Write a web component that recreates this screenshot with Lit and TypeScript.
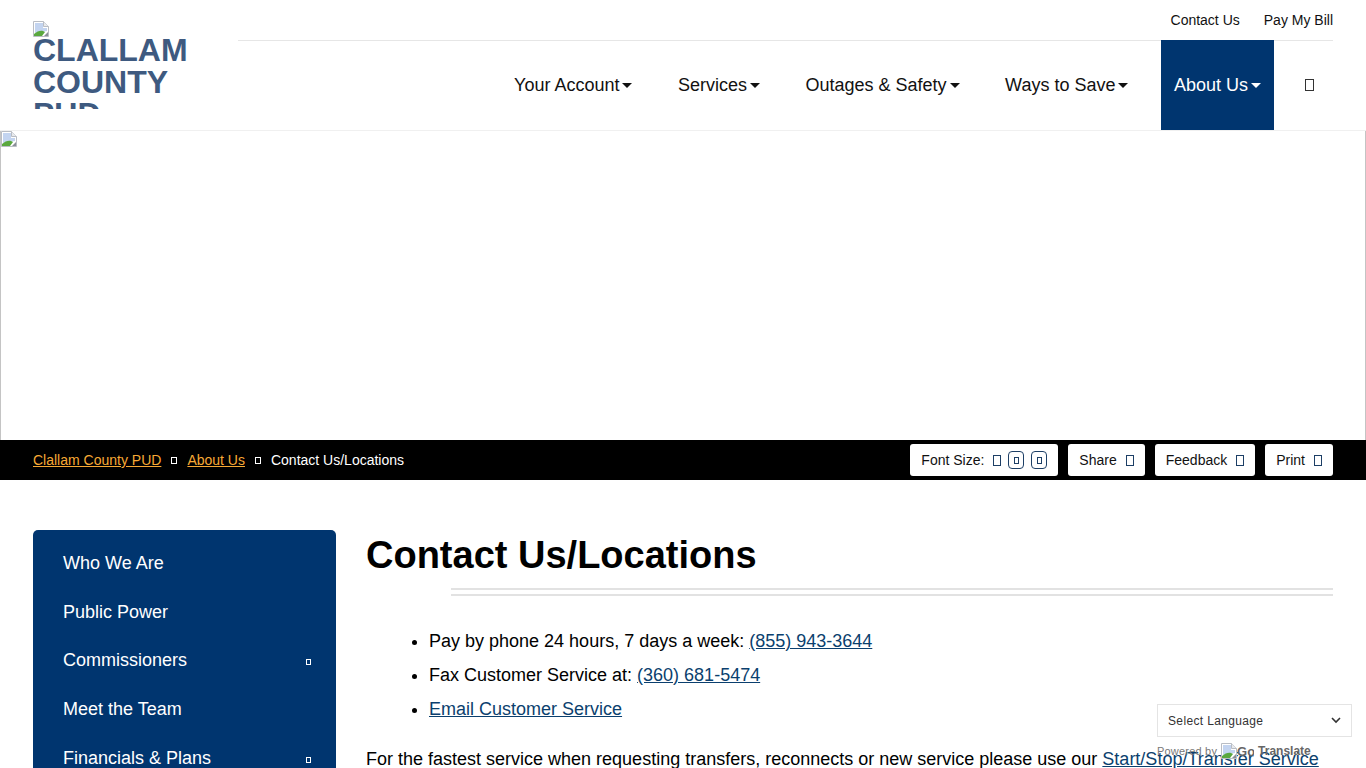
import { LitElement, html, css, svg } from "lit";
import { customElement } from "lit/decorators.js";

const broken = svg`<svg class="bi" width="16" height="16" viewBox="0 0 16 16"><path d="M.5.5h10l5 5v10H.5z" fill="#fff" stroke="#b9bdc4"/><path d="M10.5.5v5h5" fill="#e8eaed" stroke="#b9bdc4"/><path d="M2 2h8v5h4v3L2 12z" fill="#c3d4f0"/><path d="M1 15v-2c3-3 7-4 9-3l2 1-3 4z" fill="#5aa83e"/><path d="M11 15l4-4v4z" fill="#8a8f96"/></svg>`;

@customElement("app-root")
export class AppRoot extends LitElement {
  static styles = css`
    :host { display: block; height: 768px; overflow: hidden; position: relative; background: #fff; color: #000; font-family: "Liberation Sans", Arial, sans-serif; }
    a { color: inherit; text-decoration: none; }
    .tofu { display: inline-block; box-sizing: border-box; border: 1px solid currentColor; flex: none; }
    .bi { display: block; flex: none; }

    header { display: flex; height: 131px; box-sizing: border-box; border-bottom: 1px solid #f0f0f0; padding: 0 33px; }
    .logo { width: 205px; flex: none; padding-top: 21px; box-sizing: border-box; }
    .logo-img { width: 160px; height: 88px; overflow: hidden; color: #3e5a80; font-weight: 700; font-size: 32px; line-height: 32px; }
    .logo-img .bi { margin-bottom: -3px; }
    .hright { flex: 1; display: flex; flex-direction: column; }
    .util { height: 40px; box-sizing: border-box; border-bottom: 1px solid #e6e6e6; display: flex; justify-content: flex-end; align-items: center; gap: 24px; font-size: 14px; height: 41px; color: #111; }
    .nav { display: flex; justify-content: flex-end; height: 90px; margin-top: -1px; padding-right: 18px; font-size: 18px; color: #111; }
    .nav a { display: flex; align-items: center; padding: 0 13px; margin-left: 19.5px; }
    .nav a.active { background: #00356f; color: #fff; }
    .caret { width: 0; height: 0; border-left: 5px solid transparent; border-right: 5px solid transparent; border-top: 5px solid currentColor; margin-left: 3px; margin-top: 1px; }
    .nav .search { padding: 0; margin-left: 31px; width: 10px; }
    .nav .search .tofu { width: 9px; height: 12px; border-color: #333; }

    .hero { height: 309px; box-sizing: border-box; border: 1px solid #c4c4c4; border-top: none; border-bottom: none; }

    .crumbs { background: #000; height: 40px; display: flex; align-items: center; justify-content: space-between; padding: 0 33px; font-size: 14px; color: #fff; }
    .path { display: flex; align-items: center; }
    .path a { color: #f7a935; text-decoration: underline; }
    .path .tofu { width: 6px; height: 7px; margin: 1px 10px 0; }
    .tools { display: flex; gap: 10px; }
    .tool { background: #fff; color: #111; height: 32px; border-radius: 3px; display: flex; align-items: center; padding: 0 11px; gap: 9px; }
    .tool .tofu { width: 8px; height: 11px; border-color: #1d3f66; }
    .boxed { width: 16px; height: 18px; border: 1px solid #1d3f66; border-radius: 4px; display: flex; align-items: center; justify-content: center; box-sizing: border-box; }
    .boxed .tofu { width: 5px; height: 7px; }
    .sizes { display: flex; align-items: center; gap: 7px; }

    main { display: flex; padding: 50px 33px 0; gap: 30px; }
    .side { width: 303px; flex: none; background: #00356f; color: #fff; border-radius: 5px; padding: 9px 0 0 30px; box-sizing: border-box; height: 400px; font-size: 18px; }
    .side div { height: 48.8px; display: flex; align-items: center; justify-content: space-between; padding-right: 25px; }
    .side .tofu { width: 5px; height: 6px; margin-top: 3px; }
    .body { flex: 1; min-width: 0; }
    h1 { margin: 0; font-size: 38px; line-height: 50px; font-weight: 700; }
    .rule { margin: 8px 0 0 85px; height: 8px; border-top: 2px solid #e2e2e2; border-bottom: 2px solid #e2e2e2; box-sizing: content-box; height: 4px; }
    ul { margin: 28px 0 0; padding: 0 0 0 63px; font-size: 18px; line-height: 34px; }
    p { margin: 16px 0 0; font-size: 18px; line-height: 34px; white-space: nowrap; }
    .body a { color: #0b3f6e; text-decoration: underline; }

    .translate { position: absolute; left: 1157px; top: 704px; width: 195px; font-size: 12px; }
    .select { height: 33px; box-sizing: border-box; background: #fff; border: 1px solid #e4e4e4; display: flex; align-items: center; justify-content: space-between; padding: 0 10px; color: #333; letter-spacing: .35px; }
    .powered { position: relative; display: flex; align-items: center; font-size: 11px; color: #777; height: 16px; margin-top: 6px; letter-spacing: .2px; }
    .powered .bi { margin-left: 4px; }
    .powered .go { width: 17px; overflow: hidden; font-weight: 700; color: #666; font-size: 13px; letter-spacing: 0; }
    .powered .tr { margin-left: 4px; font-weight: 700; color: #666; font-size: 12px; letter-spacing: 0; }
  `;

  render() {
    const navItems = ["Your Account", "Services", "Outages & Safety", "Ways to Save"];
    const side: [string, boolean][] = [["Who We Are", false], ["Public Power", false], ["Commissioners", true], ["Meet the Team", false], ["Financials & Plans", true]];
    return html`
      <header>
        <div class="logo"><div class="logo-img">${broken}CLALLAM COUNTY PUD</div></div>
        <div class="hright">
          <div class="util"><a>Contact Us</a><a>Pay My Bill</a></div>
          <nav class="nav">
            ${navItems.map((n) => html`<a>${n}<span class="caret"></span></a>`)}
            <a class="active">About Us<span class="caret"></span></a>
            <a class="search"><span class="tofu"></span></a>
          </nav>
        </div>
      </header>
      <div class="hero">${broken}</div>
      <div class="crumbs">
        <div class="path">
          <a>Clallam County PUD</a><span class="tofu"></span><a>About Us</a><span class="tofu"></span><span>Contact Us/Locations</span>
        </div>
        <div class="tools">
          <div class="tool">Font Size:
            <span class="sizes"><span class="tofu"></span><span class="boxed"><span class="tofu"></span></span><span class="boxed"><span class="tofu"></span></span></span>
          </div>
          <div class="tool">Share <span class="tofu"></span></div>
          <div class="tool">Feedback <span class="tofu"></span></div>
          <div class="tool">Print <span class="tofu"></span></div>
        </div>
      </div>
      <main>
        <aside class="side">
          ${side.map(([t, sub]) => html`<div>${t}${sub ? html`<span class="tofu"></span>` : ""}</div>`)}
        </aside>
        <section class="body">
          <h1>Contact Us/Locations</h1>
          <div class="rule"></div>
          <ul>
            <li>Pay by phone 24 hours, 7 days a week: <a>(855) 943-3644</a></li>
            <li>Fax Customer Service at: <a>(360) 681-5474</a></li>
            <li><a>Email Customer Service</a></li>
          </ul>
          <p>For the fastest service when requesting transfers, reconnects or new service please use our <a>Start/Stop/Transfer Service</a></p>
        </section>
      </main>
      <div class="translate">
        <div class="select">Select Language
          <svg width="10" height="7" viewBox="0 0 10 7"><path d="M1 1l4 4 4-4" fill="none" stroke="#333" stroke-width="1.6"/></svg>
        </div>
        <div class="powered">Powered by ${broken}<span class="go">Go</span><span class="tr">Translate</span></div>
      </div>
    `;
  }
}
